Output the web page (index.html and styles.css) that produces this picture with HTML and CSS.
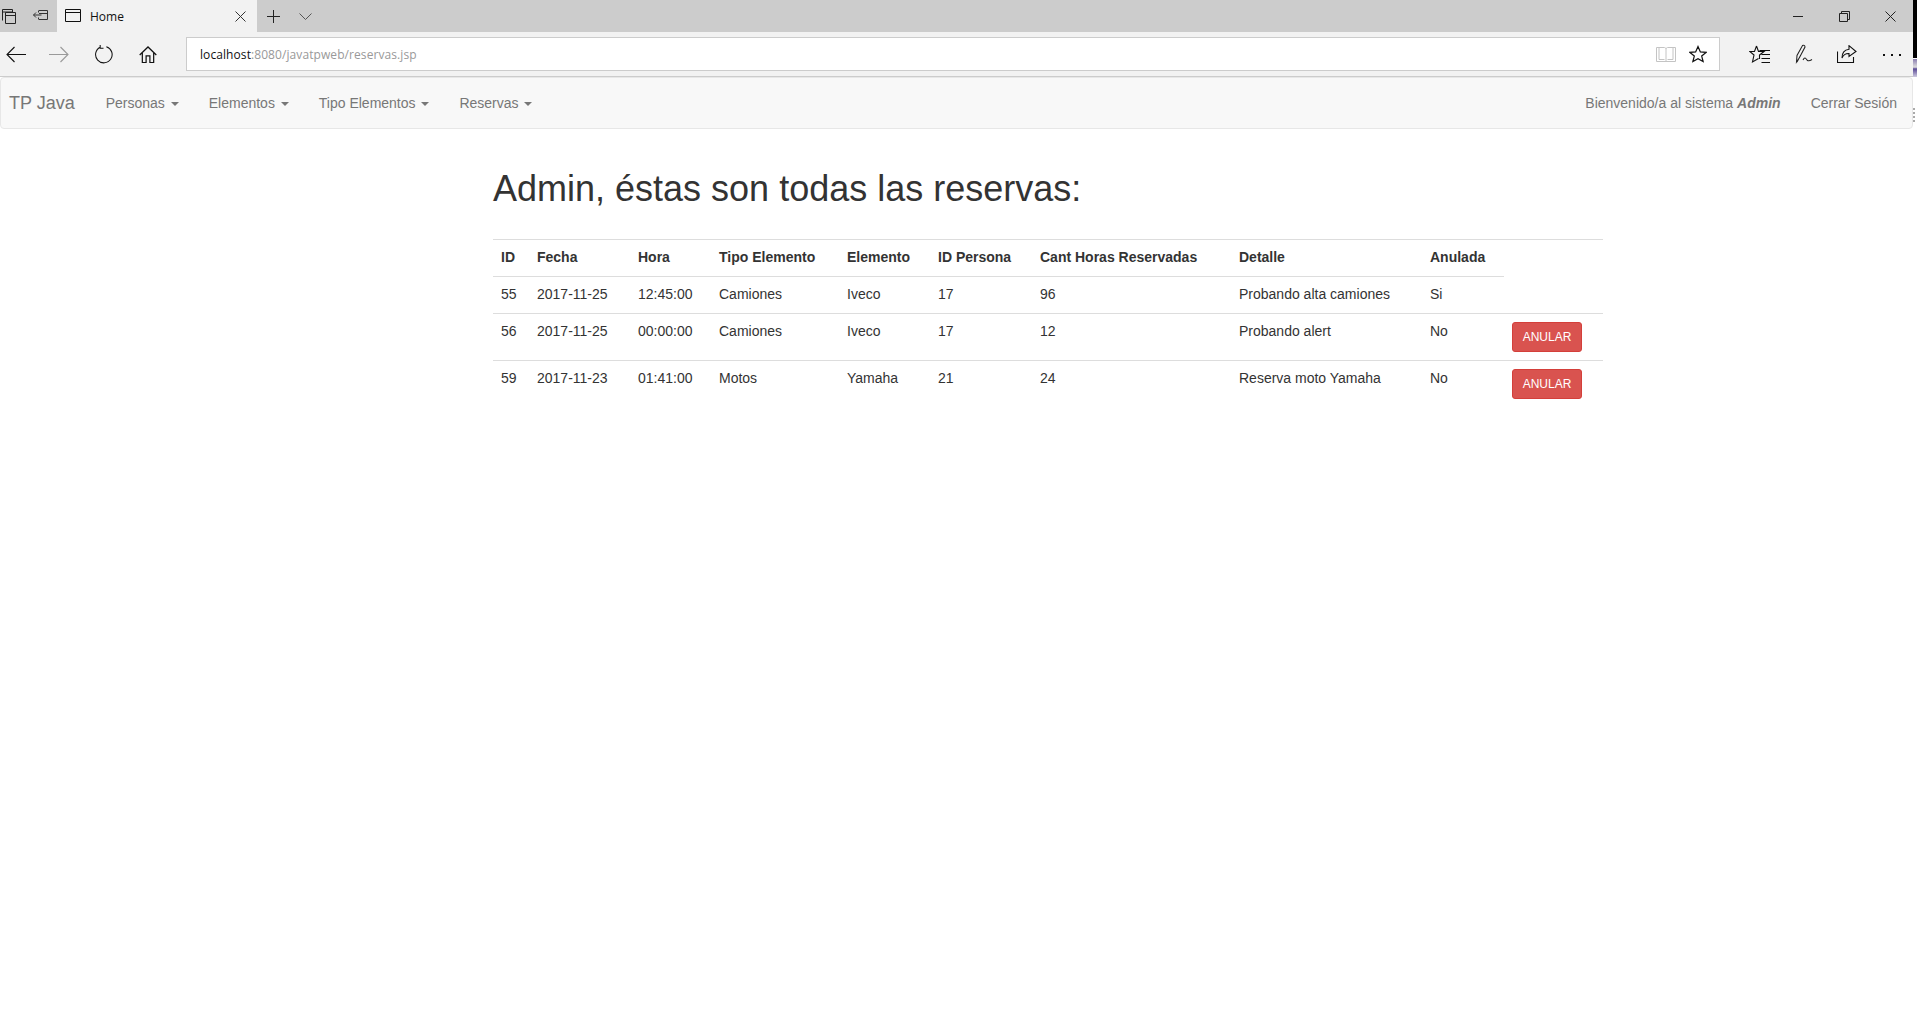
FILE: index.html
```html
<!DOCTYPE html>
<html lang="es">
<head>
<meta charset="utf-8">
<title>Home</title>
<link rel="stylesheet" href="styles.css">
</head>
<body>
<div class="window">
  <div class="tabstrip">
    <div class="tab-tools">
      <svg class="ico" width="18" height="18" viewBox="0 0 18 18"><path d="M2.500 13.500V2.500H12.500V5M2.500 5H12.500M5.500 5.500H15.500V16.500H5.500ZM5.500 8.500H15.500" fill="none" stroke="#222"/></svg>
      <svg class="ico" width="18" height="18" viewBox="0 0 18 18"><path d="M7 3.500H15.500V12.500H7M6.500 3.500V5.500M6.500 10.500V12.500M7 6.500H15.500M1.500 8H9.500M4 5.500L1.500 8L4 10.500" fill="none" stroke="#333"/></svg>
    </div>
    <div class="tab">
      <svg class="tab-page" width="17" height="14" viewBox="0 0 17 14"><path d="M.5.500H15.500V12.500H.5ZM.5 3.500H15.500" fill="none" stroke="#111"/></svg>
      <span class="tab-title">Home</span>
      <svg class="tab-close" width="11" height="11" viewBox="0 0 11 11"><path d="M.5.500L10.500 10.500M10.500.500L.5 10.500" fill="none" stroke="#333"/></svg>
    </div>
    <svg class="tab-new" width="13" height="13" viewBox="0 0 13 13"><path d="M6.500 0V13M0 6.500H13" fill="none" stroke="#222"/></svg>
    <svg class="tab-list" width="13" height="7" viewBox="0 0 13 7"><path d="M.5.500L6.500 6.500L12.500.500" fill="none" stroke="#555"/></svg>
    <div class="winbtns">
      <svg width="11" height="11" viewBox="0 0 11 11"><path d="M0 5.500H10" fill="none" stroke="#222"/></svg>
      <svg width="11" height="11" viewBox="0 0 11 11"><path d="M.5 2.500H8.500V10.500H.5ZM2.500 2.500V.5H10.500V8.500H8.500" fill="none" stroke="#222"/></svg>
      <svg width="11" height="11" viewBox="0 0 11 11"><path d="M.5.500L10.500 10.500M10.500.500L.5 10.500" fill="none" stroke="#222"/></svg>
    </div>
  </div>
  <div class="toolbar">
    <svg class="nav-ico back" width="20" height="17" viewBox="0 0 20 17"><path d="M20 8.500H1M8.500 1L1 8.500L8.500 16" fill="none" stroke="#111" stroke-width="1.100"/></svg>
    <svg class="nav-ico fwd" width="20" height="17" viewBox="0 0 20 17"><path d="M0 8.500H19M11.500 1L19 8.500L11.500 16" fill="none" stroke="#9a9a9a" stroke-width="1.100"/></svg>
    <svg class="nav-ico reload" width="19" height="19" viewBox="0 0 20 20"><path d="M6.500 2.300A8.700 8.700 0 1 0 13 1.800M6.500 0V3.400H10" fill="none" stroke="#111" stroke-width="1.100"/></svg>
    <svg class="nav-ico home" width="18" height="17" viewBox="0 0 19 18"><path d="M.7 9.500L9.500 1L18.300 9.500M3.500 7.500V17.500H7.500V10.500H11.500V17.500H15.500V7.500" fill="none" stroke="#111" stroke-width="1.300"/></svg>
    <div class="address">
      <span class="url"><span class="url-host">localhost</span>:8080/javatpweb/reservas.jsp</span>
      <svg class="addr-book" width="20" height="17" viewBox="0 0 20 17"><path d="M.5 1.500H8.500L10 2.500L11.500 1.500H19.500V15.500H.5ZM10 2.500V15.500M3 1.500V13.500H8.500M17 1.500V13.500H11.500" fill="none" stroke="#c4c4c4"/></svg>
      <svg class="addr-star" width="18" height="18" viewBox="0 0 19 18"><path d="M9.500 1.200L12 6.800L18 7.300L13.400 11.200L14.900 17L9.500 13.900L4.100 17L5.600 11.200L1 7.300L7 6.800Z" fill="none" stroke="#111" stroke-width="1.300"/></svg>
    </div>
    <div class="tools">
      <svg width="22" height="20" viewBox="0 0 22 20"><path d="M7.500 2L9.500 7.500L15 7.500L10.500 11V15M7.500 2L5.500 7.500L.8 7.500L5 11L3.500 18L9.500 14.500M10.500 6.500H21M12.500 10.500H21M12.500 14.500H21M12.500 18.500H21" fill="none" stroke="#111" stroke-width="1.100"/></svg>
      <svg width="18" height="20" viewBox="0 0 18 20"><path d="M1.500 18L2 11.500L7.500 1.500C8.500 .7 10 1.500 10 3L4.500 13.500ZM5.500 11.500L2 18M8 16C10 12 11 15 12.500 16.500C14 17.500 15.500 16.500 17 15.500" fill="none" stroke="#222" stroke-width="1.050"/></svg>
      <svg width="20" height="18" viewBox="0 0 20 18"><path d="M.5 6.500V17.500H16.500V12M12 .7L19 6.500L12 11.500V8.500C8.500 8.300 6.500 9.500 5 13C5 8 7.500 4.800 12 4.300Z" fill="none" stroke="#111" stroke-width="1.100"/></svg>
      <svg class="tools-more" width="18" height="4" viewBox="0 0 18 4"><path d="M0 1H2V3H0ZM8 1H10V3H8ZM16 1H18V3H16Z" fill="#111"/></svg>
    </div>
  </div>
  <div class="page">
    <nav class="navbar">
      <a class="brand">TP Java</a>
      <a class="nav-link">Personas <b class="caret"></b></a>
      <a class="nav-link">Elementos <b class="caret"></b></a>
      <a class="nav-link">Tipo Elementos <b class="caret"></b></a>
      <a class="nav-link">Reservas <b class="caret"></b></a>
      <span class="nav-space"></span>
      <a class="nav-link">Bienvenido/a al sistema <b class="nav-user">Admin</b></a>
      <a class="nav-link">Cerrar Sesión</a>
    </nav>
    <main class="content">
      <h1 class="title">Admin, éstas son todas las reservas:</h1>
      <table class="grid">
        <colgroup>
          <col class="c1"><col class="c2"><col class="c3"><col class="c4"><col class="c5"><col class="c6"><col class="c7"><col class="c8"><col class="c9"><col class="c10">
        </colgroup>
        <thead>
          <tr><th>ID</th><th>Fecha</th><th>Hora</th><th>Tipo Elemento</th><th>Elemento</th><th>ID Persona</th><th>Cant Horas Reservadas</th><th>Detalle</th><th>Anulada</th></tr>
        </thead>
        <tbody>
          <tr><td>55</td><td>2017-11-25</td><td>12:45:00</td><td>Camiones</td><td>Iveco</td><td>17</td><td>96</td><td>Probando alta camiones</td><td>Si</td></tr>
          <tr><td>56</td><td>2017-11-25</td><td>00:00:00</td><td>Camiones</td><td>Iveco</td><td>17</td><td>12</td><td>Probando alert</td><td>No</td><td><button class="btn-danger" type="button">ANULAR</button></td></tr>
          <tr><td>59</td><td>2017-11-23</td><td>01:41:00</td><td>Motos</td><td>Yamaha</td><td>21</td><td>24</td><td>Reserva moto Yamaha</td><td>No</td><td><button class="btn-danger" type="button">ANULAR</button></td></tr>
        </tbody>
      </table>
    </main>
  </div>
</div>
<div class="edge">
  <div class="edge-black"></div>
  <div class="edge-thumb"></div>
  <div class="edge-dots"></div>
</div>
</body>
</html>
```

FILE: styles.css
```css
* { box-sizing: border-box; }
html, body { margin: 0; height: 100%; overflow: hidden; background: #fff; }
body { display: flex; font-family: "Liberation Sans", Arial, sans-serif; font-size: 14px; line-height: 20px; color: #333; }
.window { width: 1913px; flex: none; height: 1032px; display: flex; flex-direction: column; }
.edge { width: 4px; flex: none; background: #fff; }
.edge-black { height: 58px; background: #000; }
.edge-thumb { height: 18px; margin-top: 1px; background: linear-gradient(#8a7db0, #ddd 45%, #5a4a96 55%, #cfcbe0); }
.edge-dots { width: 2px; height: 15px; margin-top: 31px; background: repeating-linear-gradient(#aaa 0 2px, #fff 2px 4px); }

.tabstrip { height: 32px; flex: none; background: #ccc; display: flex; align-items: center; }
.tab-tools { width: 57px; height: 32px; display: flex; align-items: center; gap: 14px; }
.tab-tools .ico { flex: none; }
.tab { width: 200px; height: 32px; background: #f2f2f2; display: flex; align-items: center; padding-left: 8px; padding-right: 11px; }
.tab-title { font-family: "Open Sans", sans-serif; font-size: 12px; color: #111; margin-left: 8px; padding-top: 1px; flex: 1; }
.tab-close { flex: none; }
.tab-new { margin-left: 10px; flex: none; }
.tab-list { margin-left: 19px; flex: none; }
.winbtns { margin-left: auto; display: flex; gap: 35px; padding-right: 17px; align-items: center; }

.toolbar { height: 45px; flex: none; background: #f2f2f2; border-bottom: 1px solid #ccc; display: flex; align-items: center; }
.nav-ico { flex: none; }
.back { margin-left: 6px; }
.fwd { margin-left: 23px; }
.reload { margin-left: 25px; }
.home { margin-left: 26px; }
.address { margin-left: 29px; width: 1534px; height: 34px; background: #fff; border: 1px solid #ccc; display: flex; align-items: center; padding: 0 12px 0 13px; }
.url { flex: 1; font-family: "Open Sans", sans-serif; font-size: 12px; letter-spacing: .08px; color: #999; padding-top: 1px; }
.url-host { color: #111; }
.addr-book { flex: none; margin-right: 13px; }
.addr-star { flex: none; }
.tools { flex: 1; display: flex; align-items: center; gap: 24px; padding: 0 12px 0 29px; }
.tools-more { margin-top: 2px; margin-left: auto; }

.page { flex: 1; min-height: 0; }
.navbar { height: 52px; background: #f8f8f8; border: 1px solid #e7e7e7; border-radius: 4px; display: flex; align-items: center; }
.brand { font-size: 18px; color: #777; padding: 0 16px 0 8px; }
.nav-link { color: #777; padding: 0 15px; white-space: nowrap; }
.nav-space { flex: 1; }
.nav-user { font-style: italic; }
.caret { display: inline-block; width: 0; height: 0; margin-left: 2px; vertical-align: middle; border-top: 4px solid; border-left: 4px solid transparent; border-right: 4px solid transparent; }

.content { width: 1110px; margin-left: 493px; }
.title { font-size: 36px; line-height: 40px; font-weight: 500; margin: 40px 0 30px; color: #333; }
.grid { width: 1110px; table-layout: fixed; border-collapse: collapse; border-top: 1px solid #ddd; }
.grid th, .grid td { padding: 7px 8px 9px; text-align: left; vertical-align: top; line-height: 20px; }
.grid th { font-weight: 700; border-bottom: 1px solid #ddd; }
.grid td { border-top: 1px solid #ddd; }
.c1 { width: 36px; } .c2 { width: 101px; } .c3 { width: 81px; } .c4 { width: 128px; } .c5 { width: 91px; }
.c6 { width: 102px; } .c7 { width: 199px; } .c8 { width: 191px; } .c9 { width: 82px; } .c10 { width: 99px; }
.btn-danger { display: block; width: 70px; height: 30px; margin: 1px 0 -1px; padding: 0; font-family: inherit; font-size: 12px; color: #fff; background: #d9534f; border: 1px solid #d43f3a; border-radius: 3px; }
```
